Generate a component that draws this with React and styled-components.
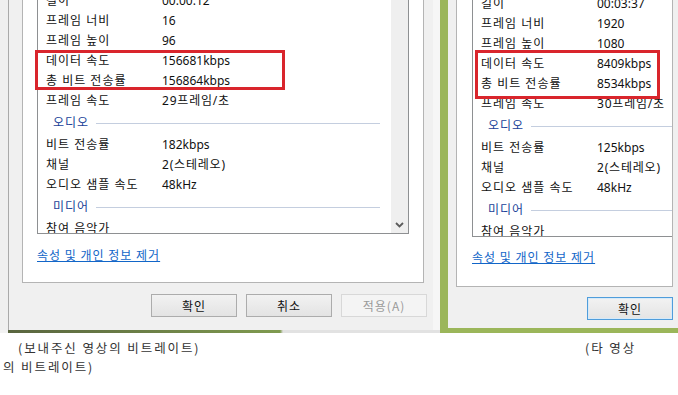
import React from 'react';
import styled, { createGlobalStyle } from 'styled-components';

const GlobalStyle = createGlobalStyle`
  html, body {
    margin: 0;
    padding: 0;
    background: #fff;
  }
  body {
    font-family: "Noto Sans", "Noto Sans CJK KR", sans-serif;
    font-size: 12px;
    color: #111;
  }
`;

const Screen = styled.div`
  width: 678px;
  height: 395px;
  overflow: hidden;
  background: #fff;
`;

const TopRow = styled.div`
  display: flex;
  height: 333px;
  overflow: hidden;
  background: #efefef;
`;

const LeftColumn = styled.div`
  display: flex;
  flex-direction: column;
  flex-shrink: 0;
`;

const Dialog = styled.div`
  box-sizing: border-box;
  background: #f0f0f0;
  ${(p) =>
    p.$active
      ? `
    flex: 1;
    min-width: 0;
    height: 333px;
    border-left: 8px solid #9bb65a;
    border-bottom: 5px solid #9bb65a;
    padding: 0 0 9px 8px;
    overflow: hidden;
  `
      : `
    width: 432px;
    height: 330px;
    margin-left: 8px;
    border-left: 1px solid #a9a9a9;
    border-right: 7px solid #f6f6f6;
    padding: 0 6px 14px 13px;
  `}
`;

const Wallpaper = styled.div`
  height: 3px;
  background: linear-gradient(to right, #f2f2f2 0, #f2f2f2 8px, #59653f 8px, #7f9a4f 280px, #e2e2e2 283px, #e2e2e2 100%);
`;

const Page = styled.div`
  box-sizing: border-box;
  width: ${(p) => p.$width}px;
  margin-top: ${(p) => p.$top}px;
  padding: 10px ${(p) => p.$padRight}px ${(p) => p.$padBottom}px ${(p) => p.$padLeft}px;
  background: #fff;
  border: 1px solid #b4b4b4;
  overflow: hidden;
`;

const ListBox = styled.div`
  box-sizing: border-box;
  display: flex;
  width: ${(p) => p.$width}px;
  height: 244px;
  border: 1px solid #8e9092;
  background: #fff;
`;

const Viewport = styled.div`
  flex: 1;
  min-width: 0;
  overflow-x: visible;
  overflow-y: clip;
`;

const Row = styled.div`
  display: grid;
  grid-template-columns: 116px 1fr;
  height: 20px;
  line-height: 20px;
  padding-left: 8px;
  white-space: nowrap;
  color: #111;
`;

const Label = styled.span`
  letter-spacing: 1px;
`;

const Value = styled.span`
  letter-spacing: ${(p) => (p.$ko ? '0.8px' : '0')};
`;

const SectionRow = styled.div`
  display: flex;
  align-items: center;
  gap: 7px;
  height: 24px;
  padding: 0 ${(p) => p.$padRight}px 0 15px;
`;

const SectionTitle = styled.span`
  color: #203f98;
  line-height: 20px;
  letter-spacing: 1px;
`;

const SectionLine = styled.div`
  flex: 1;
  height: 1px;
  background: #c4cedf;
  margin-top: 1px;
`;

const Highlight = styled.div`
  position: relative;

  &::after {
    content: '';
    position: absolute;
    top: ${(p) => p.$t}px;
    bottom: ${(p) => p.$b}px;
    left: ${(p) => p.$l}px;
    right: ${(p) => p.$r}px;
    border: 3px solid #d9252c;
    pointer-events: none;
  }
`;

const Scrollbar = styled.div`
  width: 17px;
  flex-shrink: 0;
  background: #efefef;
  display: flex;
  flex-direction: column;
  justify-content: flex-end;
`;

const ArrowButton = styled.div`
  height: 17px;
  display: flex;
  align-items: center;
  justify-content: center;
`;

const Link = styled.a`
  display: inline-block;
  margin-top: ${(p) => p.$top}px;
  font-family: "Noto Sans CJK KR", sans-serif;
  font-size: 12px;
  letter-spacing: 1px;
  line-height: 16px;
  color: #1266c8;
  text-decoration: underline;
  cursor: pointer;
`;

const ButtonBar = styled.div`
  display: flex;
  justify-content: flex-end;
  gap: 9px;
  margin-top: ${(p) => p.$top}px;
  ${(p) => (p.$width ? `width: ${p.$width}px;` : '')}
`;

const Button = styled.button`
  box-sizing: border-box;
  width: 86px;
  height: 23px;
  padding: 0;
  font-family: "Noto Sans CJK KR", sans-serif;
  font-size: 12px;
  letter-spacing: 1px;
  color: #111;
  border: 1px solid #acacac;
  background: linear-gradient(#f2f2f2, #e3e3e3);

  &:disabled {
    color: #9a9a9a;
    border-color: #d8d8d8;
    background: #f4f4f4;
  }

  ${(p) =>
    p.$primary &&
    `
    border-color: #4f9ddb;
    box-shadow: inset 0 0 0 1px #d6eaf9;
    background: linear-gradient(#f2f2f2, #e4e4e4);
  `}
`;

const Caption = styled.div`
  padding: 5px 0 0 3px;
  font-family: "Noto Sans CJK KR", sans-serif;
  font-size: 12.5px;
  letter-spacing: 1.9px;
  line-height: 19px;
  color: #333;
  white-space: nowrap;
`;

const CaptionLine = styled.div`
  display: grid;
  grid-template-columns: ${(p) => (p.$split ? '567px auto' : 'auto')};
  padding-left: ${(p) => p.$indent || 0}px;
`;

const Chevron = () => (
  <svg width="9" height="6" viewBox="0 0 9 6">
    <polyline points="1,1 4.5,4.5 8,1" fill="none" stroke="#5c5c5c" strokeWidth="1.8" />
  </svg>
);

const left = {
  top: [
    ['길이', '00:00:12'],
    ['프레임 너비', '16'],
    ['프레임 높이', '96'],
  ],
  marked: [
    ['데이터 속도', '156681kbps'],
    ['총 비트 전송률', '156864kbps'],
  ],
  frame: ['프레임 속도', '29프레임/초'],
  audio: [
    ['비트 전송률', '182kbps'],
    ['채널', '2(스테레오)'],
    ['오디오 샘플 속도', '48kHz'],
  ],
};

const right = {
  top: [
    ['길이', '00:03:37'],
    ['프레임 너비', '1920'],
    ['프레임 높이', '1080'],
  ],
  marked: [
    ['데이터 속도', '8409kbps'],
    ['총 비트 전송률', '8534kbps'],
  ],
  frame: ['프레임 속도', '30프레임/초'],
  audio: [
    ['비트 전송률', '125kbps'],
    ['채널', '2(스테레오)'],
    ['오디오 샘플 속도', '48kHz'],
  ],
};

const hasHangul = (s) => /[\uac00-\ud7a3]/.test(s);

const Rows = ({ items }) =>
  items.map(([label, value]) => (
    <Row key={label}>
      <Label>{label}</Label>
      <Value $ko={hasHangul(value)}>{value}</Value>
    </Row>
  ));

const Section = ({ title, padRight }) => (
  <SectionRow $padRight={padRight}>
    <SectionTitle>{title}</SectionTitle>
    <SectionLine />
  </SectionRow>
);

const Details = ({ data, box, padRight }) => (
  <Viewport>
    <Rows items={data.top} />
    <Highlight $t={box.t} $b={box.b} $l={box.l} $r={box.r}>
      <Rows items={data.marked} />
    </Highlight>
    <Rows items={[data.frame]} />
    <Section title="오디오" padRight={padRight} />
    <Rows items={data.audio} />
    <Section title="미디어" padRight={padRight} />
    <Rows items={[['참여 음악가', '']]} />
  </Viewport>
);

export default function App() {
  return (
    <Screen>
      <GlobalStyle />
      <TopRow>
        <LeftColumn>
          <Dialog>
            <Page $width={402} $top={-21} $padLeft={14} $padRight={14} $padBottom={18}>
              <ListBox $width={372}>
                <Details data={left} box={{ t: -1, b: 1, l: -3, r: 106 }} padRight={11} />
                <Scrollbar>
                  <ArrowButton>
                    <Chevron />
                  </ArrowButton>
                </Scrollbar>
              </ListBox>
              <Link $top={13}>속성 및 개인 정보 제거</Link>
            </Page>
            <ButtonBar $top={11}>
              <Button>확인</Button>
              <Button>취소</Button>
              <Button disabled>적용(A)</Button>
            </ButtonBar>
          </Dialog>
          <Wallpaper />
        </LeftColumn>
        <Dialog $active>
          <Page $width={217} $top={-18} $padLeft={15} $padRight={0} $padBottom={20}>
            <ListBox $width={260}>
              <Details data={right} box={{ t: -4, b: -5, l: 2, r: 71 }} padRight={0} />
            </ListBox>
            <Link $top={12}>속성 및 개인 정보 제거</Link>
          </Page>
          <ButtonBar $top={10} $width={217}>
            <Button $primary>확인</Button>
          </ButtonBar>
        </Dialog>
      </TopRow>
      <Caption>
        <CaptionLine $split $indent={15}>
          <span>(보내주신 영상의 비트레이트)</span>
          <span>(타 영상</span>
        </CaptionLine>
        <CaptionLine>
          <span>의 비트레이트)</span>
        </CaptionLine>
      </Caption>
    </Screen>
  );
}
